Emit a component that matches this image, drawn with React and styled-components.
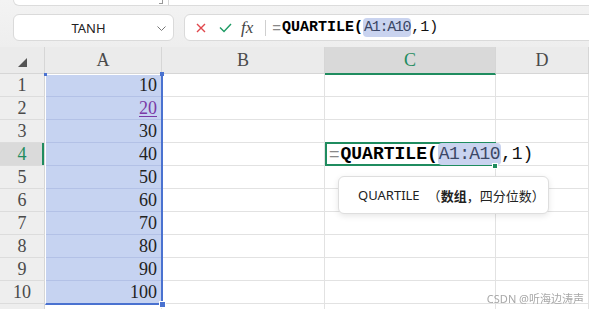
import React from 'react';
import styled, { createGlobalStyle, css } from 'styled-components';

const GREEN = '#1f8c5f';
const BLUE = '#4a72d0';

const GlobalStyle = createGlobalStyle`
	body {
		margin: 0;
		background: #fff;
		font-family: 'Noto Sans', 'Noto Sans CJK SC', sans-serif;
	}
`;

const Page = styled.div`
	position: relative;
	width: 589px;
	height: 309px;
	overflow: hidden;
	display: flex;
	flex-direction: column;
	background: #fff;
`;

// Toolbar
const Toolbar = styled.div`
	height: 47px;
	flex-shrink: 0;
	box-sizing: border-box;
	background: linear-gradient(#f3f3f3, #eeeeee);
	padding-left: 13px;
	display: flex;
	flex-direction: column;
	gap: 8px;
`;

const TopPanel = styled.div`
	height: 5px;
	margin-right: -8px;
	background: #fff;
	border: 1px solid #dcdcdc;
	border-top: none;
	border-radius: 0 0 6px 6px;
	display: flex;
	align-items: flex-start;
	padding-left: 145px;
	gap: 5px;
`;

const Grip = styled.span`
	width: 3px;
	height: 3px;
	border-right: 1px solid #999;
	border-bottom: 1px solid #999;
`;

const PanelDivider = styled.span`
	width: 1px;
	height: 5px;
	background: #d6d6d6;
`;

const BarRow = styled.div`
	display: flex;
	gap: 10px;
	height: 27px;
`;

const NameBox = styled.div`
	width: 161px;
	box-sizing: border-box;
	background: #fff;
	border: 1px solid #dadada;
	border-radius: 6px;
	display: flex;
	align-items: center;
	position: relative;
	font-size: 13px;
	color: #222;
	justify-content: center;
	padding-right: 10px;
`;

const Chevron = styled.svg`
	position: absolute;
	right: 7px;
	top: 11px;
`;

const FormulaBox = styled.div`
	flex: 1;
	margin-right: -8px;
	box-sizing: border-box;
	background: #fff;
	border: 1px solid #dadada;
	border-radius: 6px;
	display: flex;
	align-items: center;
	padding-left: 11px;
`;

const IconSlot = styled.span`
	display: flex;
	align-items: center;
	margin-right: ${p => p.$gap}px;
`;

const Fx = styled.span`
	font-family: 'Liberation Serif', serif;
	font-style: italic;
	font-size: 17px;
	color: #444;
	margin-right: 12px;
	line-height: 1;
`;

const Separator = styled.span`
	width: 1px;
	height: 16px;
	background: #cfcfcf;
	margin-right: 6px;
`;

const FormulaText = styled.span`
	font-family: 'Liberation Mono', monospace;
	font-size: ${p => p.$size}px;
	white-space: nowrap;
	color: #111;
	display: flex;
	align-items: center;
`;

const Eq = styled.span`
	font-family: 'Liberation Sans', sans-serif;
	color: #888;
	font-weight: 400;
	margin-right: 1px;
`;

const FnName = styled.span`
	font-weight: 700;
	color: #000;
`;

const RangeRef = styled.span`
	background: #c9d3ef;
	color: #3b4766;
	border-radius: 4px;
	padding: 1px 1px;
	letter-spacing: ${p => p.$spacing || 0}px;
`;

const Rest = styled.span`
	color: #111;
`;

// Sheet
const Sheet = styled.div`
	position: relative;
	flex: 1;
	display: grid;
	grid-template-columns: 45px 117px 163px 171px 1fr;
	grid-template-rows: 27px repeat(11, 23px);
	font-family: 'Liberation Serif', serif;
	font-size: 18px;
`;

const placed = css`
	grid-row: ${p => p.$row};
	grid-column: ${p => p.$col};
`;

const Corner = styled.div`
	${placed}
	background: #ebebeb;
	border-right: 1px solid #d6d6d6;
	border-bottom: 1px solid #d6d6d6;
	display: flex;
	align-items: flex-end;
	padding: 0 0 6px 18px;
	box-sizing: border-box;
`;

const ColHead = styled.div`
	${placed}
	background: ${p => (p.$active ? '#d9d9d9' : '#ebebeb')};
	color: ${p => (p.$active ? GREEN : '#4a4a4a')};
	border-right: 1px solid #d6d6d6;
	border-bottom: ${p => (p.$active ? `2px solid ${GREEN}` : '1px solid #d6d6d6')};
	box-sizing: border-box;
	display: flex;
	align-items: center;
	justify-content: center;
	${p =>
		p.$active &&
		css`
			margin-bottom: -1px;
			position: relative;
			z-index: 1;
		`}
`;

const RowHead = styled.div`
	${placed}
	background: ${p => (p.$active ? '#dadada' : '#eeeeee')};
	color: ${p => (p.$active ? GREEN : '#4a4a4a')};
	border-right: 1px solid #d6d6d6;
	border-bottom: 1px solid #dcdcdc;
	box-sizing: border-box;
	display: flex;
	align-items: center;
	justify-content: center;
	${p =>
		p.$active &&
		css`
			box-shadow: inset -2px 0 0 ${GREEN};
		`}
`;

const Cell = styled.div`
	${placed}
	box-sizing: border-box;
	border-right: 1px solid #e2e2e2;
	border-bottom: 1px solid ${p => (p.$selected ? '#b3c1e6' : '#e2e2e2')};
	background: ${p => (p.$selected ? '#c6d3f1' : '#fff')};
	display: flex;
	align-items: center;
	justify-content: flex-end;
	padding-right: 4px;
	color: #222;
	line-height: 1;
`;

const Link = styled.span`
	color: #7a3aa6;
	text-decoration: underline;
	text-underline-offset: 2px;
`;

const SelectionFrame = styled.div`
	grid-column: 2;
	grid-row: 2 / 12;
	position: relative;
	box-sizing: border-box;
	border-left: 1px solid #fff;
	border-top: 1px solid #fff;
	border-right: 2px solid ${BLUE};
	border-bottom: 2px solid ${BLUE};
	margin-right: -1px;
	margin-bottom: -1px;
	pointer-events: none;
	z-index: 1;
`;

const Handle = styled.span`
	position: absolute;
	background: ${BLUE};
	width: ${p => p.$size}px;
	height: ${p => p.$size}px;
	${p => p.$pos}
	${p =>
		p.$ring &&
		css`
			outline: 1px solid #fff;
		`}
`;

const Editor = styled.div`
	grid-column: 4;
	grid-row: 5;
	position: relative;
	box-sizing: border-box;
	border: 2px solid ${GREEN};
	margin: -1px 0 0 0;
	height: 24px;
	display: flex;
	align-items: center;
	padding-left: 2px;
	background: #fff;
	z-index: 2;
`;

const EditorHandle = styled.span`
	position: absolute;
	right: -3px;
	bottom: -4px;
	width: 4px;
	height: 4px;
	background: ${GREEN};
	outline: 1px solid #fff;
`;

const Tooltip = styled.div`
	position: absolute;
	left: 11px;
	top: 32px;
	width: 211px;
	height: 38px;
	box-sizing: border-box;
	background: #fff;
	border: 1px solid #dedede;
	border-radius: 6px;
	box-shadow: 0 2px 6px rgba(0, 0, 0, 0.1);
	display: flex;
	align-items: center;
	gap: 8px;
	padding-left: 19px;
	font-family: 'Noto Sans', 'Noto Sans CJK SC', sans-serif;
	font-size: 13px;
	color: #222;
	white-space: nowrap;
`;

const Strong = styled.b`
	font-weight: 700;
`;

const Watermark = styled.div`
	position: absolute;
	right: 5px;
	bottom: 3px;
	font-family: 'Noto Sans', 'Noto Sans CJK SC', sans-serif;
	font-size: 11px;
	color: #a8a8a8;
	filter: blur(0.3px);
	z-index: 3;
`;

const values = [10, 20, 30, 40, 50, 60, 70, 80, 90, 100];
const cols = ['A', 'B', 'C', 'D'];
const rows = [...values, null];

const App = () => (
	<Page>
		<GlobalStyle />
		<Toolbar>
			<TopPanel>
				<Grip />
				<PanelDivider />
			</TopPanel>
			<BarRow>
				<NameBox>
					TANH
					<Chevron width='9' height='5' viewBox='0 0 9 5'>
						<polyline points='0.5,0.5 4.5,4.5 8.5,0.5' fill='none' stroke='#777' strokeWidth='1' />
					</Chevron>
				</NameBox>
				<FormulaBox>
					<IconSlot $gap={13}>
						<svg width='10' height='10' viewBox='0 0 10 10'>
							<path d='M1 1 L9 9 M9 1 L1 9' stroke='#e0474c' strokeWidth='1.4' />
						</svg>
					</IconSlot>
					<IconSlot $gap={9}>
						<svg width='13' height='10' viewBox='0 0 13 10'>
							<polyline points='1,4.5 5,8.5 12,1' fill='none' stroke='#1c9a63' strokeWidth='1.4' />
						</svg>
					</IconSlot>
					<Fx>fx</Fx>
					<Separator />
					<FormulaText $size={15}>
						<Eq>=</Eq>
						<FnName>QUARTILE(</FnName>
						<RangeRef $spacing={-1.3}>A1:A10</RangeRef>
						<Rest>,1)</Rest>
					</FormulaText>
				</FormulaBox>
			</BarRow>
		</Toolbar>

		<Sheet>
			<Corner $row={1} $col={1}>
				<svg width='9' height='9' viewBox='0 0 9 9'>
					<polygon points='9,0 9,9 0,9' fill='#555' />
				</svg>
			</Corner>
			{cols.map((c, ci) => (
				<ColHead key={c} $row={1} $col={ci + 2} $active={c === 'C'}>
					{c}
				</ColHead>
			))}

			{rows.map((v, i) => (
				<React.Fragment key={i}>
					<RowHead $row={i + 2} $col={1} $active={i === 3}>
						{v !== null && i + 1}
					</RowHead>
					<Cell $row={i + 2} $col={2} $selected={v !== null}>
						{v === 20 ? <Link>{v}</Link> : v}
					</Cell>
					<Cell $row={i + 2} $col={3} />
					<Cell $row={i + 2} $col={4} />
					<Cell $row={i + 2} $col={5} />
				</React.Fragment>
			))}

			<SelectionFrame>
				<Handle $size={3} $pos='left: -2px; top: -2px;' />
				<Handle $size={4} $pos='right: -3px; top: -3px;' />
				<Handle $size={5} $pos='right: -4px; bottom: -4px;' $ring />
			</SelectionFrame>

			<Editor>
				<FormulaText $size={18}>
					<Eq>=</Eq>
					<FnName>QUARTILE(</FnName>
					<RangeRef $spacing={-0.6}>A1:A10</RangeRef>
					<Rest>,1)</Rest>
				</FormulaText>
				<EditorHandle />
				<Tooltip>
					<span>QUARTILE</span>
					<span>
						（<Strong>数组</Strong>，四分位数）
					</span>
				</Tooltip>
			</Editor>
		</Sheet>

		<Watermark>CSDN @听海边涛声</Watermark>
	</Page>
);

export default App;
